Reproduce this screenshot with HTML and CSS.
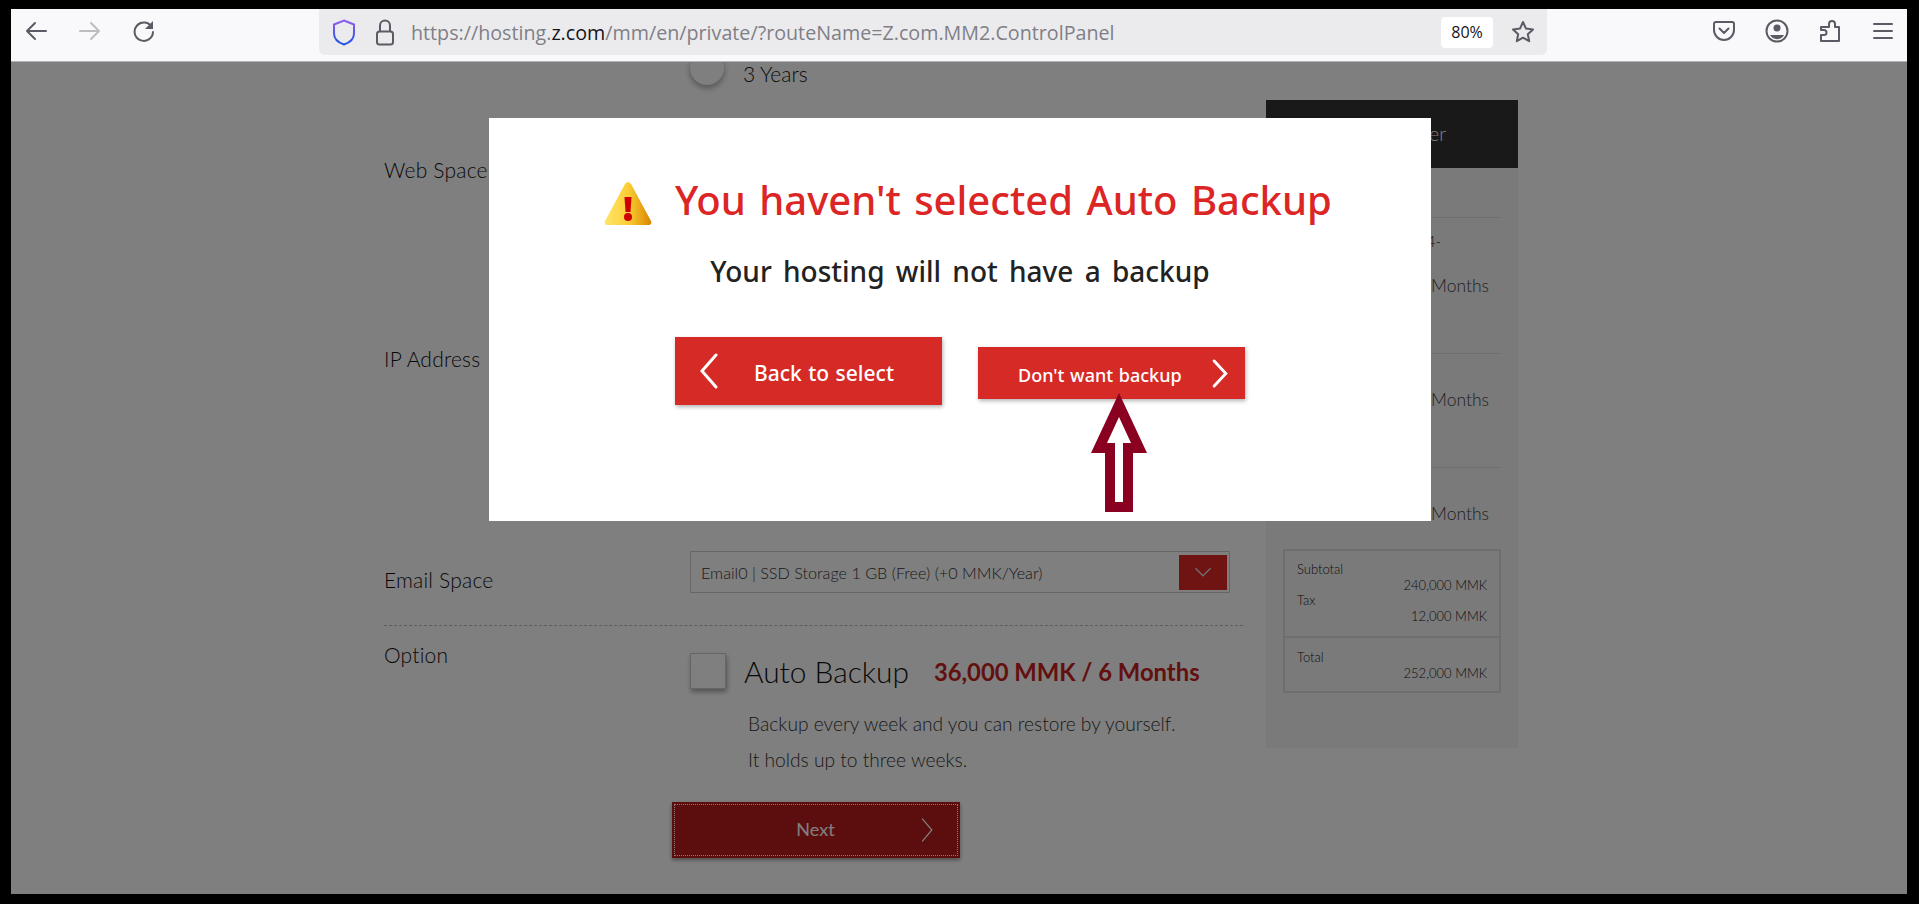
FILE: index.html
```html
<!DOCTYPE html>
<html>
    <head>
        <title>Z.com Control Panel</title>
        <link rel="stylesheet" href="styles.css">
    </head>

    <body>
        <div id="toolbar">
            <div class="nav-buttons">
                <svg class="icon" viewBox="0 0 24 24"><path d="M22 12H3M11 4l-8 8 8 8"/></svg>
                <svg class="icon faded" viewBox="0 0 24 24"><path d="M2 12h19M13 4l8 8-8 8"/></svg>
                <svg class="icon" viewBox="0 0 24 24"><path d="M20 8.5A9.2 9.2 0 1 0 21 13"/><path class="solid" d="M21 2v8h-8z"/></svg>
            </div>
            <div id="urlbar">
                <svg class="shield" viewBox="0 0 24 28">
                    <defs>
                        <linearGradient id="shieldGrad" x1="0" y1="0" x2="0" y2="1">
                            <stop offset="0" stop-color="#8f5cf0"/>
                            <stop offset="1" stop-color="#1f55e0"/>
                        </linearGradient>
                    </defs>
                    <path d="M12 2l10 4v9c0 5-4 9-10 11C6 24 2 20 2 15V6z"/>
                </svg>
                <svg class="lock" viewBox="0 0 20 28"><rect x="2" y="13" width="16" height="13" rx="2.5"/><path d="M5 13V7a5 5 0 0 1 10 0v6"/></svg>
                <span class="url">https://hosting.<b>z.com</b>/mm/en/private/?routeName=Z.com.MM2.ControlPanel</span>
                <span class="zoom-level">80%</span>
                <svg class="icon star" viewBox="0 0 24 24"><path d="M12 2l3 6.6 7 .8-5.200 4.800 1.400 7L12 17.700 5.800 21.200l1.400-7L2 9.400l7-.8z"/></svg>
            </div>
            <div class="tool-buttons">
                <svg class="icon" viewBox="0 0 24 24"><path d="M4 3h16a2 2 0 0 1 2 2v6a10 10 0 0 1-20 0V5a2 2 0 0 1 2-2z"/><path d="M7.500 9.500l4.500 4.500 4.500-4.500"/></svg>
                <svg class="icon" viewBox="0 0 24 24"><circle cx="12" cy="12" r="10.500"/><circle class="solid" cx="12" cy="9" r="3.500"/><path class="solid" d="M5 16h14a8 8 0 0 1-14 0z"/></svg>
                <svg class="icon" viewBox="0 0 24 24"><path d="M3 22v-6h3a2.500 2.500 0 0 0 0-5H3V8h8V5a3 3 0 0 1 6 0v3h4v14z"/></svg>
                <svg class="icon" viewBox="0 0 24 24"><path d="M3 5h18M3 12h18M3 19h18"/></svg>
            </div>
        </div>

        <div id="viewport">
            <div id="page">
                <div class="form">
                    <div class="row term-row">
                        <div class="label"></div>
                        <div class="radio-line">
                            <span class="radio"></span>
                            <span class="radio-text">3 Years</span>
                        </div>
                    </div>
                    <div class="row web-row"><div class="label">Web Space</div></div>
                    <div class="row ip-row"><div class="label">IP Address</div></div>
                    <div class="row email-row">
                        <div class="label">Email Space</div>
                        <div class="select">
                            <span>Email0 | SSD Storage 1 GB (Free) (+0 MMK/Year)</span>
                            <span class="select-arrow">
                                <svg viewBox="0 0 20 12"><path d="M3 2l7 7 7-7"/></svg>
                            </span>
                        </div>
                    </div>
                    <div class="row option-row">
                        <div class="label">Option</div>
                        <div class="option-body">
                            <div class="option-line">
                                <span class="checkbox"></span>
                                <span class="option-name">Auto Backup</span>
                                <span class="option-price">36,000 MMK / 6 Months</span>
                            </div>
                            <p class="option-note">Backup every week and you can restore by yourself.</p>
                            <p class="option-note">It holds up to three weeks.</p>
                        </div>
                    </div>
                    <button class="next-button">
                        <span>Next</span>
                        <svg viewBox="0 0 16 32"><path d="M2 2l12 14L2 30"/></svg>
                    </button>
                </div>

                <div class="order">
                    <div class="order-head">Your Order</div>
                    <div class="order-item first">
                        <div class="plan">Plan 2024-</div>
                        <span class="months">12 Months</span>
                    </div>
                    <div class="order-item second"><span class="months">12 Months</span></div>
                    <div class="order-item third"><span class="months">12 Months</span></div>
                    <div class="totals">
                        <div class="totals-part">
                            <div>Subtotal</div>
                            <div class="amount">240,000 MMK</div>
                            <div>Tax</div>
                            <div class="amount">12,000 MMK</div>
                        </div>
                        <div class="totals-part">
                            <div>Total</div>
                            <div class="amount">252,000 MMK</div>
                        </div>
                    </div>
                </div>
            </div>

            <div id="overlay"></div>

            <div id="modal">
                <div class="modal-title">
                    <svg class="warning" viewBox="0 0 48 43">
                        <defs>
                            <linearGradient id="warnGrad" x1="0" y1="0" x2="1" y2="0">
                                <stop offset="0" stop-color="#ffe56a"/>
                                <stop offset="0.5" stop-color="#fbcf35"/>
                                <stop offset="1" stop-color="#d98500"/>
                            </linearGradient>
                        </defs>
                        <path fill="url(#warnGrad)" d="M21 2c1.500-2.500 4.500-2.500 6 0l20 37c1 2-.2 4-2.500 4h-41C1.200 43 0 41 1 39z"/>
                        <path fill="#d00000" d="M20.500 15h7l-1 15h-5z"/>
                        <circle fill="#d00000" cx="24" cy="35" r="4"/>
                    </svg>
                    <h1>You haven't selected Auto Backup</h1>
                </div>
                <h2>Your hosting will not have a backup</h2>
                <div class="modal-buttons">
                    <button class="modal-button back">
                        <svg viewBox="0 0 20 36"><path d="M17 2L3 18l14 16"/></svg>
                        <span>Back to select</span>
                    </button>
                    <button class="modal-button skip">
                        <span>Don't want backup</span>
                        <svg viewBox="0 0 16 30"><path d="M2 2l12 13L2 28"/></svg>
                    </button>
                </div>
            </div>

            <!-- annotation arrow drawn on top of the screenshot -->
            <svg id="arrow" viewBox="0 0 56 119">
                <path fill-rule="evenodd" d="M28 0L56 60H42V119H14V60H0ZM28 24L16 50H24V109H32V50H40Z"/>
            </svg>
        </div>
    </body>
</html>
```

FILE: styles.css
```css
* {
    box-sizing: border-box;
}

body {
    margin: 0;
    width: 1919px;
    height: 904px;
    padding: 9px 12px 10px 11px;
    background-color: #000;
    overflow: hidden;
    font-family: Lato, "Liberation Sans", sans-serif;
}

/* browser bar */

#toolbar {
    display: flex;
    align-items: flex-start;
    height: 53px;
    background-color: #f9f9fb;
    border-bottom: 1px solid #b5b5b5;
}

.icon {
    width: 24px;
    height: 24px;
    fill: none;
    stroke: #5b5b66;
    stroke-width: 2;
    stroke-linecap: round;
    stroke-linejoin: round;
}

.icon .solid {
    fill: #5b5b66;
    stroke: none;
}

.icon.faded {
    stroke: #bdbdc2;
}

.nav-buttons {
    display: flex;
    gap: 30px;
    width: 308px;
    padding: 10px 0 0 13px;
}

#urlbar {
    display: flex;
    align-items: center;
    width: 1228px;
    height: 46px;
    padding-left: 13px;
    background-color: #ebebed;
    border-radius: 0 0 6px 6px;
}

.shield {
    width: 24px;
    height: 29px;
    fill: none;
    stroke: url(#shieldGrad);
    stroke-width: 2;
}

.lock {
    width: 20px;
    height: 29px;
    margin-left: 19px;
    fill: none;
    stroke: #5b5b66;
    stroke-width: 2;
}

.url {
    flex: 1;
    margin-left: 16px;
    font-family: "Open Sans", sans-serif;
    font-size: 19.7px;
    color: #7f7f87;
    white-space: nowrap;
}

.url b {
    font-weight: 400;
    color: #15141a;
}

.zoom-level {
    width: 52px;
    height: 31px;
    margin-right: 18px;
    background-color: #fff;
    border-radius: 4px;
    font-family: "Open Sans", sans-serif;
    font-size: 16px;
    line-height: 31px;
    text-align: center;
    color: #15141a;
}

.star {
    margin-right: 12px;
}

.tool-buttons {
    display: flex;
    gap: 29px;
    padding: 10px 0 0 165px;
}

/* the page behind the dialog */

#viewport {
    position: relative;
    height: 832px;
    overflow: hidden;
}

#page {
    display: flex;
    height: 100%;
    padding-left: 373px;
    background-color: #fff;
}

.form {
    width: 859px;
    margin-top: -11px;
}

.row {
    display: grid;
    grid-template-columns: 306px 1fr;
}

.label {
    font-size: 21px;
    font-weight: 300;
    line-height: 40px;
    letter-spacing: 0.2px;
    color: #111;
}

.term-row {
    height: 99px;
}

.radio-line {
    display: flex;
    align-items: center;
    height: 34px;
}

.radio {
    width: 34px;
    height: 34px;
    background-color: #fff;
    border-radius: 50%;
    box-shadow: 0 3px 6px rgba(0, 0, 0, 0.35);
}

.radio-text {
    margin: 11px 0 0 19px;
    font-size: 21px;
    font-weight: 300;
    color: #111;
}

.web-row {
    height: 189px;
}

.ip-row {
    height: 212px;
}

.email-row {
    height: 75px;
    border-bottom: 1px dashed #bbb;
}

.email-row .label,
.option-row .label {
    padding-top: 9px;
}

.select {
    display: flex;
    align-items: center;
    justify-content: space-between;
    width: 540px;
    height: 42px;
    padding: 0 2px 0 10px;
    border: 1px solid #ccc;
    font-size: 16.2px;
    font-weight: 300;
    color: #333;
}

.select-arrow {
    display: flex;
    align-items: center;
    justify-content: center;
    width: 48px;
    height: 35px;
    background-color: #e02626;
}

.select-arrow svg {
    width: 22px;
    height: 13px;
    fill: none;
    stroke: #ddd;
    stroke-width: 1.2;
}

.option-body {
    padding-top: 26px;
}

.option-line {
    display: flex;
    align-items: center;
}

.checkbox {
    width: 36px;
    height: 36px;
    background-color: #fff;
    border: 1px solid #ccc;
    box-shadow: 1px 3px 5px rgba(0, 0, 0, 0.35);
}

.option-name {
    margin: 1px 0 0 18px;
    font-size: 29.9px;
    font-weight: 300;
    color: #111;
}

.option-price {
    margin: 3px 0 0 25px;
    font-size: 23.8px;
    font-weight: 700;
    color: #c62020;
}

.option-note {
    margin: 0 0 0 58px;
    font-size: 19.2px;
    font-weight: 300;
    line-height: 36px;
    color: #333;
}

.option-note:first-of-type {
    margin-top: 17px;
}

.next-button {
    display: flex;
    align-items: center;
    width: 288px;
    height: 56px;
    margin: 24px 0 0 288px;
    padding: 0 25px 0 0;
    background-color: #b91c1c;
    border: none;
    outline: 1px dotted #fff;
    outline-offset: -3px;
    box-shadow: 0 2px 4px rgba(0, 0, 0, 0.4);
    font-family: inherit;
    font-size: 18px;
    color: #fff;
}

.next-button span {
    flex: 1;
    padding: 0 0 2px 40px;
}

.next-button svg {
    width: 16px;
    height: 26px;
    fill: none;
    stroke: #fff;
    stroke-width: 1.500;
}

.order {
    position: relative;
    width: 252px;
    height: 648px;
    margin: 38px 0 0 23px;
    padding: 0 17px;
    background-color: #f4f4f4;
    font-size: 17px;
    color: #555;
}

.order-head {
    height: 68px;
    margin: 0 -17px;
    padding-left: 18px;
    background-color: #333;
    font-size: 19px;
    font-weight: 300;
    line-height: 68px;
    text-align: center;
    color: #fff;
}

.order-item {
    border-top: 1px solid #ddd;
}

.order-item.first {
    height: 136px;
    margin-top: 49px;
    padding-top: 14px;
}

.plan {
    padding-right: 60px;
    font-size: 15px;
    font-weight: 300;
    text-align: right;
    color: #222;
}

.order-item.second {
    height: 114px;
    padding-top: 35px;
}

.order-item.third {
    height: 82px;
    padding-top: 35px;
}

.months {
    display: block;
    text-align: right;
    padding-right: 12px;
    font-size: 17.500px;
    font-weight: 300;
    color: #444;
}

.first .months {
    margin-top: 25px;
}

.totals {
    border: 2px solid #ddd;
    font-size: 13px;
    font-weight: 300;
    line-height: 15.5px;
    color: #222;
}

.totals-part {
    padding: 11px 12px 12px;
}

.totals-part + .totals-part {
    padding: 12px 12px 10px;
    border-top: 2px solid #ddd;
}

.amount {
    text-align: right;
}

/* dialog */

#overlay {
    position: absolute;
    inset: 0;
    background-color: rgba(0, 0, 0, 0.5);
}

#modal {
    position: absolute;
    left: 478px;
    top: 56px;
    width: 942px;
    height: 403px;
    padding-top: 54px;
    background-color: #fff;
    font-family: "Noto Sans", sans-serif;
}

.modal-title {
    display: flex;
    align-items: flex-start;
    padding-left: 115px;
}

.warning {
    width: 48px;
    height: 43px;
    margin-top: 10px;
}

h1 {
    margin: 0 0 0 23px;
    font-size: 40px;
    font-weight: 500;
    line-height: 56px;
    word-spacing: 3px;
    color: #dc2626;
}

h2 {
    margin: 24px 0 0;
    font-size: 28px;
    font-weight: 500;
    line-height: 38px;
    word-spacing: 4px;
    text-align: center;
    color: #222;
}

.modal-buttons {
    display: flex;
    align-items: flex-start;
    gap: 36px;
    margin: 47px 0 0 186px;
}

.modal-button {
    display: flex;
    align-items: center;
    border: none;
    background-color: #d62a26;
    box-shadow: 1px 2px 4px rgba(0, 0, 0, 0.3);
    font-family: inherit;
    font-weight: 500;
    color: #fff;
}

.modal-button svg {
    fill: none;
    stroke: #fff;
    stroke-width: 3;
    stroke-linecap: round;
}

.back {
    width: 267px;
    height: 68px;
    padding: 0 0 0 24px;
    font-size: 21px;
    word-spacing: 1px;
}

.back span {
    padding-top: 4px;
}

.back svg {
    width: 20px;
    height: 36px;
    margin-right: 35px;
}

.skip {
    justify-content: space-between;
    width: 267px;
    height: 52px;
    margin-top: 10px;
    padding: 0 17px 0 40px;
    font-size: 18px;
    word-spacing: 1px;
}

.skip span {
    padding-top: 4px;
}

.skip svg {
    width: 16px;
    height: 29px;
}

#arrow {
    position: absolute;
    left: 1080px;
    top: 331px;
    width: 56px;
    height: 119px;
    fill: #8a0020;
}
```
